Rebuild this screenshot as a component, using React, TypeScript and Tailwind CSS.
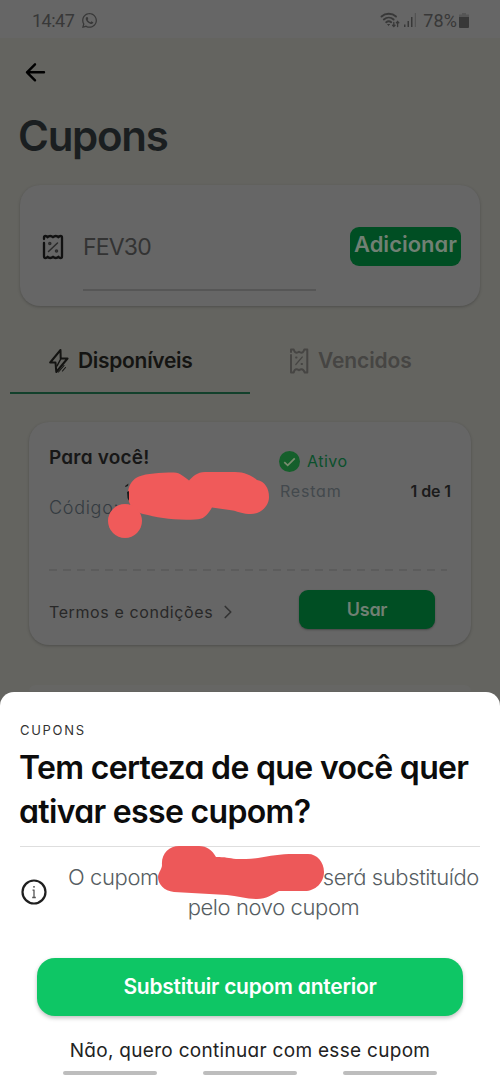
import { ChevronRight } from "lucide-react";
import { FaWhatsapp } from "react-icons/fa";

/** Status bar: clock on the left, connectivity and battery on the right. */
function StatusBar() {
  return (
    <div className="flex h-[38px] items-center justify-between bg-[#666666] pt-[2px] pr-[31px] pl-[32px] font-['Roboto',sans-serif] text-[18px] text-[#383838]">
      <div className="flex items-center gap-[7px]">
        <span className="tracking-[-0.5px]">14:47</span>
        <FaWhatsapp className="h-[17px] w-[17px]" />
      </div>
      <div className="flex items-center">
        <svg viewBox="0 0 20 16" className="h-4 w-5" fill="none" stroke="currentColor" strokeWidth="1.9" strokeLinecap="round">
          <path d="M1.5 4.5c4-3.6 10.500-3.600 14.500 0M3.800 7.500c3-2.500 7-2.500 9.800 0M6.200 10.200c1.500-1.200 3.600-1.200 5 0" />
          <path d="M8 12.500h1.600l-.8.8z" strokeWidth="1" fill="currentColor" />
          <path d="M13.800 10.500v4M12.600 13.200l1.200 1.300 1.200-1.300M17.600 14.500v-5M16.400 10.800l1.200-1.300 1.200 1.300" strokeWidth="1.300" />
        </svg>
        <svg viewBox="0 0 14 14" className="ml-[3px] h-3.5 w-3.5" fill="currentColor">
          <path d="M1 11.500h1.500V14H1zM4.500 8H6v6H4.500zM8 4h1.500v10H8z" />
          <path d="M11.800 0h1.200v14h-1.200z" opacity=".4" />
        </svg>
        <span className="ml-[6px] tracking-[0.1px]">78%</span>
        <svg viewBox="0 0 10 15" className="ml-[2px] h-[15px] w-[10px]" fill="currentColor">
          <path d="M3 0h4v1.500h3V4H0V1.500h3z" opacity=".35" />
          <path d="M0 4h10v10a1 1 0 0 1-1 1H1a1 1 0 0 1-1-1z" />
        </svg>
      </div>
    </div>
  );
}

function CouponIcon() {
  return (
    <svg viewBox="0 0 22 26" className="h-[26px] w-[22px] text-[#111111]" fill="none" stroke="currentColor" strokeWidth="2.300" strokeLinecap="round" strokeLinejoin="round">
      <path d="M2 5V3.500Q2 2 3.500 2q1.300 0 2 1.200Q6.500 2 8.200 2T11 3.200Q12 2 13.800 2t2.700 1.200Q17.200 2 18.500 2 20 2 20 3.500v19q0 1.500-1.500 1.500-1.300 0-2-1.200-1 1.200-2.700 1.200T11 22.800Q10 24 8.200 24t-2.700-1.200Q4.800 24 3.500 24 2 24 2 22.500V9" />
      <path d="M6.500 17.500l9-8.500" strokeWidth="1.500" stroke="#2b2b2b" />
      <circle cx="7.800" cy="9.500" r="1" strokeWidth="1.500" stroke="#2b2b2b" />
      <circle cx="14.500" cy="17" r="1" strokeWidth="1.500" stroke="#2b2b2b" />
    </svg>
  );
}

function ExpiredIcon() {
  return (
    <svg viewBox="0 0 20 26" className="h-[26px] w-[20px]" fill="none" stroke="currentColor" strokeWidth="2" strokeLinecap="round" strokeLinejoin="round">
      <path d="M2 4V1.500h2.700q1 3.200 3 3.200 1 0 2.300-.9 1.300.9 2.300.9 2 0 3-3.200h3v23h-2.500q-1.300-3.200-3.200-3.200-1.300 0-2.600 1-1.300-1-2.600-1-1.900 0-2.700 3.200H2V7" />
      <path d="M6.800 16.500l6.500-7.500" strokeWidth="1.200" />
      <path d="M7 9.500h.6M12.500 16h.6" strokeWidth="1.800" />
    </svg>
  );
}

function BoltIcon() {
  return (
    <svg viewBox="0 0 20 26" className="h-[26px] w-[20px]" fill="none" stroke="currentColor" strokeWidth="2" strokeLinecap="round" strokeLinejoin="round">
      <path d="M11.500 2L1.200 14.500h5.300L7.300 24 18.500 10.500h-6.800z" />
      <path d="M12 10.500L8 18" strokeWidth="1.500" />
      <path d="M9.500 24l5.500-6.500M13.500 23l3-3.500" strokeWidth="1.100" />
    </svg>
  );
}

function Tabs() {
  return (
    <div className="mx-[10px] mt-[27px] flex h-[61px] text-[21px] font-semibold">
      <div className="flex w-60 items-start border-b-2 border-[#12402b] pl-[39px] text-[#141412]">
        <div className="flex h-[55px] items-center">
          <BoltIcon />
          <span className="ml-[9px] pt-px tracking-[-0.3px]">Disponíveis</span>
        </div>
      </div>
      <div className="flex h-[55px] flex-1 items-center pl-[39px] text-[#464543]">
        <ExpiredIcon />
        <span className="ml-[9px] pt-px tracking-[-0.1px]">Vencidos</span>
      </div>
    </div>
  );
}

function CouponCard() {
  return (
    <div className="relative mx-[29px] mt-[28px] h-[223px] rounded-[20px] bg-[#666666] px-5 shadow-[0_1px_3px_rgba(0,0,0,0.22)]">
      <div className="flex h-[147px] justify-between">
        <div className="pt-[24px]">
          <p className="text-[19px] leading-6 font-semibold tracking-[0.2px] text-[#171717]">Para você!</p>
          <p className="mt-[26px] text-[18px] leading-6 font-light tracking-[0.7px] text-[#343b41]">Código:</p>
        </div>
        <div className="w-[172px] pt-[27px]">
          <div className="flex h-6 items-center">
            <svg viewBox="0 0 20 20" className="h-[21px] w-[21px]">
              <circle cx="10" cy="10" r="10" fill="#155f2b" />
              <path d="M5 10.500l3.300 3.200L15 7" fill="none" stroke="#7a8c70" strokeWidth="1.600" />
            </svg>
            <span className="ml-[7px] text-[16px] tracking-[0.5px] text-[#0b502c]">Ativo</span>
          </div>
          <div className="mt-[6px] flex h-6 items-center justify-between text-[16px]">
            <span className="ml-[1px] tracking-[0.8px] text-[#43494d]">Restam</span>
            <span className="font-semibold tracking-[-0.1px] text-[#1b1b1b]">1 de 1</span>
          </div>
        </div>
      </div>
      <svg viewBox="0 0 398 2" className="h-[2px] w-[398px]">
        <path d="M0 1h398" stroke="#5a5a59" strokeWidth="1.500" strokeDasharray="8 6" />
      </svg>
      <div className="flex items-start">
        <div className="mt-[29px] flex h-6 items-center text-[16px] text-[#282828]">
          <span className="w-[164px] tracking-[0.6px] whitespace-nowrap">Termos e condições</span>
          <ChevronRight className="ml-[4px] h-[22px] w-[22px] text-[#333333]" strokeWidth={1.800} />
        </div>
        <button className="mt-[19px] ml-[60px] h-[39px] w-[136px] rounded-[9px] bg-[#004e23] text-[18px] leading-[38px] font-semibold tracking-[-0.3px] text-[#718074] shadow-[0_1px_2px_rgba(0,0,0,0.3)]">
          Usar
        </button>
      </div>
      <svg viewBox="0 0 170 76" className="absolute top-[46px] left-[78px] h-[76px] w-[170px]" fill="#f05a5a">
        <path d="M32 8.500C40 5.500 52 4.500 67 4.500c6 0 11 5 15 8 4-4 8-8.500 16-8.500h30c10 0 17 4 22 8 8 1 12 9 12 17 0 9-8 17-18 17-8 0-12-2-18-3.500l-21-3c-5 8-8 12-17 12-22 1-37-2-52-5.500C24 43 20 33 21 24c1-8 5-13 11-15.500z" />
        <path d="M21.500 15.500l-3.500 2.500.5 1 2.500-1zM20 24l.5 6 1.500 3V23z" fill="#1c1c1c" />
        <circle cx="18" cy="53" r="17" />
      </svg>
    </div>
  );
}

function ConfirmSheet() {
  return (
    <section className="relative h-[390px] rounded-t-[14px] bg-white pt-[29px]">
      <p className="ml-5 text-[13px] leading-[18px] tracking-[1.7px] text-[#333333]">CUPONS</p>
      <h2 className="ml-[19px] pt-[7px] text-[32px] leading-[44px] font-semibold tracking-[-0.67px] whitespace-nowrap text-[#0c0c0c]">
        Tem certeza de que você quer
        <br />
        ativar esse cupom?
      </h2>
      <hr className="mx-5 mt-[12px] border-[#dedede]" />
      <div className="mt-[15px] flex items-center pl-[21px]">
        <svg viewBox="0 0 26 26" className="h-[26px] w-[26px]" fill="none" stroke="#1f1f1f">
          <circle cx="13" cy="13" r="11.500" strokeWidth="2.200" />
          <path d="M13 11v7.500M11.200 18.500h3.600M11.500 11.200h2M12 7.800h2" strokeWidth="1.300" stroke="#555" />
        </svg>
        <div className="ml-[21px] w-[411px] text-[22px] leading-[30px] font-light tracking-[-0.4px] whitespace-nowrap text-[#565d62]">
          <div className="flex justify-between">
            <span>O cupom</span>
            <span>será substituído</span>
          </div>
          <p className="text-center">pelo novo cupom</p>
        </div>
      </div>
      <svg viewBox="0 0 166 54" className="absolute top-[153px] left-[158px] h-[54px] w-[166px]" fill="#ed5859">
        <path d="M4 20C3 9 11 1 21 1h20c8 0 13 4 17 11 9 0 13 1 20 2 8 0 14 0 22-1 12-2 22-4 36-4h14c9 0 16 8 16 18 0 11-9 19-19 19h-26c-8 4-12 8-22 8-10 0-20-3-30-4l-53-3C6 46 0 39 0 32c0-4 4-8 4-12z" />
      </svg>
      <button className="mt-[36px] ml-[37px] block h-[58px] w-[426px] rounded-[18px] bg-[#0ec665] text-[21px] leading-[58px] font-semibold tracking-[-0.25px] text-white shadow-[0_2px_4px_rgba(0,0,0,0.25)]">
        Substituir cupom anterior
      </button>
      <button className="mt-[23px] block h-6 w-full text-center text-[19px] leading-6 tracking-[0.3px] text-[#222222]">
        Não, quero continuar com esse cupom
      </button>
      <div className="mt-[8px] flex justify-center gap-[46px]">
        <span className="h-1 w-[94px] rounded-full bg-[#bdbdbd]" />
        <span className="h-1 w-[94px] rounded-full bg-[#bdbdbd]" />
        <span className="h-1 w-[94px] rounded-full bg-[#bdbdbd]" />
      </div>
    </section>
  );
}

export default function App() {
  return (
    <main className="h-[1082px] w-[500px] overflow-hidden bg-[#646460] font-['Inter',sans-serif] [font-feature-settings:'cv11']">
      <div className="h-[692px]">
        <StatusBar />
        <div className="h-[147px] pt-[22px]">
          <svg viewBox="0 0 24 24" className="ml-[23px] h-6 w-6 text-black" fill="none" stroke="currentColor" strokeWidth="2.400" strokeLinecap="round" strokeLinejoin="round">
            <path d="M21 12.300H4M12 4.300l-8 8 8 8" />
          </svg>
          <h1 className="mt-[28px] ml-[18px] text-[42px] leading-[48px] font-semibold tracking-[-1.3px] text-[#1a1e20]">Cupons</h1>
        </div>
        <div className="mx-[20px] flex h-[121px] rounded-[20px] bg-[#666666] shadow-[0_1px_3px_rgba(0,0,0,0.22)]">
          <div className="mt-[49px] ml-[22px]">
            <CouponIcon />
          </div>
          <div className="ml-[19px] h-[106px] w-[233px] border-b-2 border-[#565656] pt-[46px] text-[23px] leading-8 tracking-[-0.8px] text-[#333333]">
            FEV30
          </div>
          <button className="mt-[42px] ml-[34px] h-[39px] w-[111px] rounded-[9px] bg-[#004e23] pb-[5px] text-[22px] leading-[34px] font-semibold text-[#718074]">
            Adicionar
          </button>
        </div>
        <Tabs />
        <CouponCard />
        <div className="mx-[29px] mt-[40px] h-[6px] rounded-t-[20px] bg-[#666664]" />
      </div>
      <ConfirmSheet />
    </main>
  );
}
